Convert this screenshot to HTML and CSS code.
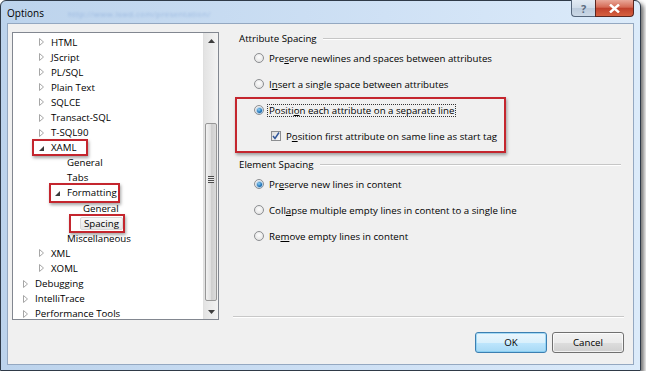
FILE: index.html
```html
<!DOCTYPE html>
<html lang="en">
<head>
<meta charset="UTF-8" />
<meta name="viewport" content="width=device-width, initial-scale=1" />
<title>Options</title>
<link rel="stylesheet" href="styles.css">
</head>
<body>
  <div class="window" role="dialog" aria-label="Options">
    <div class="titlebar">
      <span class="title">Options</span>
      <span class="watermark">http://www.lswd.com/presentation/</span>
      <div class="caption-buttons">
        <span class="cap-btn help">?</span>
        <span class="cap-btn close">
          <svg width="11" height="9" viewBox="0 0 11 9"><path d="M1 0.5 L10 8.5 M10 0.5 L1 8.5" stroke="#fff" stroke-width="2.4"/></svg>
        </span>
      </div>
    </div>

    <div class="client">
      <div class="main">
        <div class="tree">
          <ul class="tree-items">
            <li class="lvl2"><span class="tw"><svg class="arrow" width="5" height="8" viewBox="0 0 5 8"><path d="M0.5 0.5 L4.5 4 L0.5 7.5 Z"/></svg></span><span class="label">HTML</span></li>
            <li class="lvl2"><span class="tw"><svg class="arrow" width="5" height="8" viewBox="0 0 5 8"><path d="M0.5 0.5 L4.5 4 L0.5 7.5 Z"/></svg></span><span class="label">JScript</span></li>
            <li class="lvl2"><span class="tw"><svg class="arrow" width="5" height="8" viewBox="0 0 5 8"><path d="M0.5 0.5 L4.5 4 L0.5 7.5 Z"/></svg></span><span class="label">PL/SQL</span></li>
            <li class="lvl2"><span class="tw"><svg class="arrow" width="5" height="8" viewBox="0 0 5 8"><path d="M0.5 0.5 L4.5 4 L0.5 7.5 Z"/></svg></span><span class="label">Plain Text</span></li>
            <li class="lvl2"><span class="tw"><svg class="arrow" width="5" height="8" viewBox="0 0 5 8"><path d="M0.5 0.5 L4.5 4 L0.5 7.5 Z"/></svg></span><span class="label">SQLCE</span></li>
            <li class="lvl2"><span class="tw"><svg class="arrow" width="5" height="8" viewBox="0 0 5 8"><path d="M0.5 0.5 L4.5 4 L0.5 7.5 Z"/></svg></span><span class="label">Transact-SQL</span></li>
            <li class="lvl2"><span class="tw"><svg class="arrow" width="5" height="8" viewBox="0 0 5 8"><path d="M0.5 0.5 L4.5 4 L0.5 7.5 Z"/></svg></span><span class="label">T-SQL90</span></li>
            <li class="lvl2"><span class="mark mark-xaml"><span class="tw open"></span><span class="label">XAML</span></span></li>
            <li class="lvl3"><span class="tw"></span><span class="label">General</span></li>
            <li class="lvl3"><span class="tw"></span><span class="label">Tabs</span></li>
            <li class="lvl3"><span class="mark mark-fmt"><span class="tw open"></span><span class="label">Formatting</span></span></li>
            <li class="lvl4"><span class="tw"></span><span class="label">General</span></li>
            <li class="lvl4"><span class="mark mark-spacing"><span class="tw"></span><span class="label selected">Spacing</span></span></li>
            <li class="lvl3"><span class="tw"></span><span class="label">Miscellaneous</span></li>
            <li class="lvl2"><span class="tw"><svg class="arrow" width="5" height="8" viewBox="0 0 5 8"><path d="M0.5 0.5 L4.5 4 L0.5 7.5 Z"/></svg></span><span class="label">XML</span></li>
            <li class="lvl2"><span class="tw"><svg class="arrow" width="5" height="8" viewBox="0 0 5 8"><path d="M0.5 0.5 L4.5 4 L0.5 7.5 Z"/></svg></span><span class="label">XOML</span></li>
            <li class="lvl1"><span class="tw"><svg class="arrow" width="5" height="8" viewBox="0 0 5 8"><path d="M0.5 0.5 L4.5 4 L0.5 7.5 Z"/></svg></span><span class="label">Debugging</span></li>
            <li class="lvl1"><span class="tw"><svg class="arrow" width="5" height="8" viewBox="0 0 5 8"><path d="M0.5 0.5 L4.5 4 L0.5 7.5 Z"/></svg></span><span class="label">IntelliTrace</span></li>
            <li class="lvl1"><span class="tw"><svg class="arrow" width="5" height="8" viewBox="0 0 5 8"><path d="M0.5 0.5 L4.5 4 L0.5 7.5 Z"/></svg></span><span class="label">Performance Tools</span></li>
          </ul>
          <div class="scrollbar">
            <div class="sb-btn"><svg width="7" height="4" viewBox="0 0 7 4"><path d="M0 4 L3.5 0 L7 4 Z" fill="#3e3e3e"/></svg></div>
            <div class="sb-track">
              <div class="sb-thumb"><span class="grip"></span></div>
            </div>
            <div class="sb-btn"><svg width="7" height="4" viewBox="0 0 7 4"><path d="M0 0 L3.5 4 L7 0 Z" fill="#3e3e3e"/></svg></div>
          </div>
        </div>

        <div class="page">
          <div class="group-head"><span>Attribute Spacing</span><span class="rule"></span></div>
          <div class="option"><span class="radio"></span><span>Pre<u>s</u>erve newlines and spaces between attributes</span></div>
          <div class="option"><span class="radio"></span><span>I<u>n</u>sert a single space between attributes</span></div>
          <div class="mark-block">
            <div class="option"><span class="radio checked"></span><span class="focused">Positi<u>o</u>n each attribute on a separate line</span></div>
            <div class="option sub"><span class="check">
              <svg width="8" height="8" viewBox="0 0 8 8"><path d="M1 4 L3 6.5 L7 0.5" fill="none" stroke="#31579a" stroke-width="1.5"/></svg>
            </span><span>P<u>o</u>sition first attribute on same line as start tag</span></div>
          </div>

          <div class="group-head second"><span>Element Spacing</span><span class="rule"></span></div>
          <div class="option"><span class="radio checked"></span><span>Pr<u>e</u>serve new lines in content</span></div>
          <div class="option"><span class="radio"></span><span>Coll<u>a</u>pse multiple empty lines in content to a single line</span></div>
          <div class="option"><span class="radio"></span><span>Re<u>m</u>ove empty lines in content</span></div>

          <div class="separator"></div>
        </div>
      </div>

      <div class="footer">
        <button type="button" class="btn default">OK</button>
        <button type="button" class="btn">Cancel</button>
      </div>
    </div>
  </div>
</body>
</html>
```

FILE: styles.css
```css
:root {
  --frame-dark: #2f3a48;
  --client: #f0f0f0;
  --red: #c4262e;
  --text: #000;
}

* {
  box-sizing: border-box;
}

body {
  margin: 0;
  background: #fff;
  font-family: "Open Sans", "Noto Sans", sans-serif;
  font-size: 9.7px;
  color: var(--text);
}

.window {
  width: 641px;
  height: 371px;
  border: 1px solid var(--frame-dark);
  border-radius: 6px 6px 0 0;
  background: linear-gradient(90deg, #bcd3ec, #cfe1f5 60%, #dcebfa);
  padding: 0 6px 5px 6px;
  display: flex;
  flex-direction: column;
  box-shadow: 3px 3px 4px rgba(0, 0, 0, 0.55);
}

/* title bar */
.titlebar {
  height: 22px;
  display: flex;
  align-items: flex-start;
}

.title {
  margin-top: 5px;
  font-size: 10px;
}

.watermark {
  margin: 7px 0 0 24px;
  font-size: 8px;
  color: #6f96cf;
  opacity: 0.45;
  filter: blur(0.9px);
  letter-spacing: 0.3px;
}

.caption-buttons {
  margin-left: auto;
  margin-top: -1px;
  display: flex;
}

.cap-btn {
  height: 17px;
  display: flex;
  align-items: center;
  justify-content: center;
  border: 1px solid #55657a;
  border-top: none;
}

.help {
  width: 24px;
  border-radius: 0 0 0 4px;
  border-right: none;
  background: linear-gradient(#e3ebf4, #d0dce9 50%, #bccbdc 51%, #cbd8e6);
  color: #5c6c80;
  font-size: 11px;
  font-weight: bold;
}

.close {
  width: 39px;
  border-color: #5a2620;
  border-radius: 0 0 4px 0;
  background: linear-gradient(#e9a899, #d56a55 45%, #c0412c 52%, #d6603f);
}

/* client area */
.client {
  flex: 1;
  background: var(--client);
  border: 1px solid #94a8c1;
  padding: 8px 9px 11px 4px;
  display: flex;
  flex-direction: column;
}

.main {
  height: 288px;
  display: flex;
}

/* tree view */
.tree {
  width: 207px;
  height: 288px;
  background: #fff;
  border: 1px solid #828790;
  display: flex;
  overflow: hidden;
}

.tree-items {
  flex: 1;
  list-style: none;
  margin: 0;
  padding: 1.5px 0 0 0;
  overflow: hidden;
}

.tree-items li {
  height: 15.1px;
  line-height: 15.1px;
  display: flex;
  align-items: center;
  white-space: nowrap;
}

.lvl1 { padding-left: 6px; }
.lvl2 { padding-left: 22px; }
.lvl3 { padding-left: 38px; }
.lvl4 { padding-left: 54px; }

.tw {
  width: 16px;
  height: 15px;
  flex: none;
  display: inline-flex;
  align-items: center;
  justify-content: center;
  padding-right: 3px;
}

.arrow path {
  fill: #fff;
  stroke: #a6a6a6;
  stroke-width: 1;
}

.tw.open::before {
  content: "";
  width: 0;
  height: 0;
  border-left: 5px solid transparent;
  border-bottom: 5px solid #3a3a3a;
  margin-top: 2px;
}

.label {
  padding: 0 3px 0 0;
}

.label.selected {
  padding: 0 3px;
  margin-left: -3px;
  line-height: 11px;
  background: linear-gradient(#f8f8f8, #e6e6e6);
  border: 1px solid #d9d9d9;
  border-radius: 2px;
}

/* red annotation boxes */
.mark {
  position: relative;
  display: inline-flex;
  align-items: center;
}

.mark::after,
.mark-block::after {
  content: "";
  position: absolute;
  border: 2px solid var(--red);
  box-shadow: 1px 2px 3px rgba(0, 0, 0, 0.35);
  pointer-events: none;
}

.mark-xaml::after { top: -1px; bottom: -1px; left: -3px; right: -8px; }
.mark-fmt::after { top: -2px; bottom: -2px; left: -2px; right: 0; }
.mark-spacing::after { top: -2px; bottom: -2px; left: 2px; right: -2px; }

/* scroll bar */
.scrollbar {
  width: 15px;
  flex: none;
  display: flex;
  flex-direction: column;
  background: linear-gradient(90deg, #e3e3e3, #f3f3f3);
  border-left: 1px solid #e0e0e0;
}

.sb-btn {
  height: 15px;
  display: flex;
  align-items: center;
  justify-content: center;
}

.sb-track {
  flex: 1;
  display: flex;
  flex-direction: column;
  padding: 75px 0 3px;
}

.sb-thumb {
  flex: 1;
  margin: 0 1px;
  border: 1px solid #979797;
  border-radius: 2px;
  background: linear-gradient(90deg, #f2f2f2, #e0e0e0 45%, #cfcfcf 55%, #dcdcdc);
  display: flex;
  align-items: center;
  justify-content: center;
}

.grip {
  width: 6px;
  height: 7px;
  background: repeating-linear-gradient(#4d4d4d 0 1px, #e8e8e8 1px 2px);
  margin-top: -66px;
}

/* property page */
.page {
  flex: 1;
  display: flex;
  flex-direction: column;
  padding-left: 20px;
}

.group-head {
  height: 13px;
  display: flex;
  align-items: center;
  gap: 6px;
  padding-right: 3px;
}

.group-head.second {
  margin-top: 9px;
}

.rule {
  flex: 1;
  height: 2px;
  border-top: 1px solid #c6c6c6;
  border-bottom: 1px solid #fff;
}

.option {
  height: 26px;
  display: flex;
  align-items: center;
  gap: 5px;
  padding-left: 15px;
  white-space: nowrap;
}

.option.sub {
  padding-left: 32px;
}

.option u {
  text-decoration-thickness: 1px;
  text-underline-offset: 1px;
}

.radio {
  width: 10px;
  height: 10px;
  flex: none;
  border-radius: 50%;
  border: 1px solid #8c8e91;
  background: radial-gradient(circle at 50% 40%, #fdfdfd, #dcdcdc);
  display: flex;
  align-items: center;
  justify-content: center;
}

.radio.checked::after {
  content: "";
  width: 5px;
  height: 5px;
  border-radius: 50%;
  background: radial-gradient(circle at 40% 35%, #8fd1f5, #1b6fb5 60%, #0d4d8c);
  box-shadow: 0 0 0 1px rgba(120, 180, 230, 0.5);
}

.check {
  width: 10px;
  height: 10px;
  flex: none;
  border: 1px solid #8c8e91;
  background: linear-gradient(135deg, #dedede, #fafafa);
  display: flex;
  align-items: center;
  justify-content: center;
}

.focused {
  outline: 1px dotted #333;
  line-height: 11px;
  padding: 0 1px;
  margin-left: -1px;
}

.mark-block {
  position: relative;
}

.mark-block::after {
  top: 0;
  bottom: -4px;
  left: -4px;
  right: 118px;
}

.separator {
  margin-top: auto;
  margin-bottom: 2px;
  margin-left: -6px;
  height: 2px;
  border-top: 1px solid #c8c8c8;
  border-bottom: 1px solid #fff;
}

/* dialog buttons */
.footer {
  margin-top: 12px;
  display: flex;
  justify-content: flex-end;
  gap: 5px;
}

.btn {
  width: 72px;
  height: 21px;
  font-family: inherit;
  font-size: 9.7px;
  color: #000;
  border: 1px solid #707070;
  border-radius: 3px;
  background: linear-gradient(#f2f2f2, #ebebeb 50%, #dddddd 51%, #cfcfcf);
  box-shadow: inset 0 0 0 1px rgba(255, 255, 255, 0.7);
  padding: 0;
}

.btn.default {
  border-color: #3c7fb1;
  background: linear-gradient(#eaf6fd, #d9f0fc 50%, #bee6fd 51%, #a7d9f5);
  box-shadow: inset 0 0 0 1px rgba(120, 200, 240, 0.6);
}
```
